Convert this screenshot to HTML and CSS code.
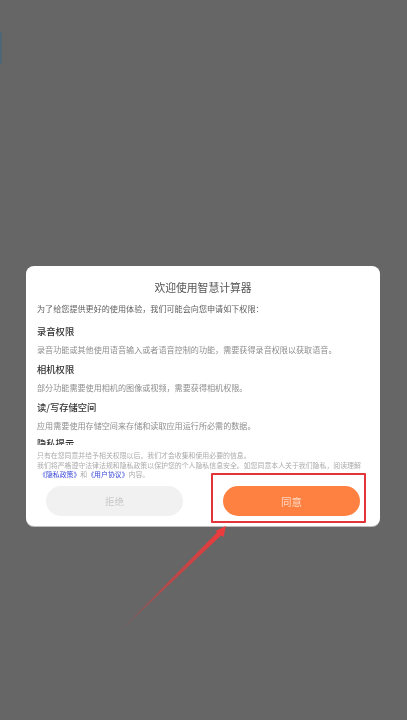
FILE: index.html
```html
<!DOCTYPE html>
<html lang="zh">
<head>
<meta charset="utf-8">
<title>欢迎使用智慧计算器</title>
<link rel="stylesheet" href="styles.css">
</head>
<body>
<div class="edge"></div>
<div class="card">
  <div class="scroll">
    <h1 class="title">欢迎使用智慧计算器</h1>
    <p class="intro">为了给您提供更好的使用体验&#xFF0C;我们可能会向您申请如下权限&#xFF1A;</p>
    <h2 class="perm">录音权限</h2>
    <p class="desc">录音功能或其他使用语音输入或者语音控制的功能&#xFF0C;需要获得录音权限以获取语音。</p>
    <h2 class="perm">相机权限</h2>
    <p class="desc">部分功能需要使用相机的图像或视频&#xFF0C;需要获得相机权限。</p>
    <h2 class="perm">读/写存储空间</h2>
    <p class="desc">应用需要使用存储空间来存储和读取应用运行所必需的数据。</p>
    <h2 class="perm cut">隐私提示</h2>
  </div>
  <div class="legal">
    <p>只有在您同意并给予相关权限以后&#xFF0C;我们才会收集和使用必要的信息。</p>
    <p>我们将严格遵守法律法规和隐私政策以保护您的个人隐私信息安全。如您同意本人关于我们隐私&#xFF0C;阅读理解</p>
    <p class="links"><a>《隐私政策》</a>和<a>《用户协议》</a>内容。</p>
  </div>
  <div class="actions">
    <button class="btn reject">拒绝</button>
    <button class="btn agree">同意</button>
  </div>
</div>
<div class="mark"></div>
<svg class="arrow" width="407" height="720" viewBox="0 0 407 720" aria-hidden="true">
  <defs>
    <linearGradient id="fade" gradientUnits="userSpaceOnUse" x1="113" y1="638" x2="226" y2="526">
      <stop offset="0" stop-color="#e8383a" stop-opacity="0"/>
      <stop offset="0.5" stop-color="#e8383a" stop-opacity="0.65"/>
      <stop offset="1" stop-color="#f03a3c"/>
    </linearGradient>
  </defs>
  <path d="M113 638 L217 532.5 L215.5 531 L226 526 L223.5 537 L221 535.5 Z" fill="url(#fade)"/>
</svg>
</body>
</html>
```
FILE: styles.css
```css
* { box-sizing: border-box; }
html, body { margin: 0; height: 720px; overflow: hidden; }
body {
  background: #666666;
  font-family: "Noto Sans CJK SC", "Noto Sans", sans-serif;
  padding: 266px 27px 0 26px;
  position: relative;
}
.edge {
  position: absolute;
  left: 0;
  top: 32px;
  width: 2px;
  height: 32px;
  background: #4f6675;
  filter: blur(0.5px);
}
.card {
  width: 354px;
  height: 260px;
  background: #fff;
  border-radius: 8px;
  padding: 14px 11px 0;
  display: flex;
  flex-direction: column;
  box-shadow: 0 1px 0 #bdbdbd;
}
.scroll { height: 165px; overflow: hidden; filter: blur(0.6px); }
.title {
  margin: 0;
  font-size: 10.8px;
  line-height: 14px;
  font-weight: 400;
  text-align: center;
  color: #555;
}
.intro {
  margin: 9px 0 0;
  font-size: 8.1px;
  line-height: 11px;
  color: #5e5e5e;
}
.perm {
  margin: 8px 0 0;
  font-size: 9.3px;
  line-height: 12px;
  font-weight: 500;
  color: #333;
}
.intro + .perm { margin-top: 11px; }
.desc {
  margin: 7px 0 0;
  font-size: 8.1px;
  line-height: 11px;
  color: #8e8e8e;
}
.perm.cut { margin-top: 6px; }
.legal {
  height: 29px;
  margin-top: 6px;
  font-size: 6.9px;
  line-height: 9.6px;
  color: #ababab;
  white-space: nowrap;
  filter: blur(0.6px);
}
.legal p { margin: 0; }
.links { padding-left: 2px; }
.links a { color: #3848d8; }
.actions {
  display: flex;
  justify-content: space-between;
  padding: 6px 9px 0;
}
.btn {
  width: 137px;
  height: 30px;
  border: 0;
  border-radius: 15px;
  padding: 0;
  font: inherit;
  font-size: 9.5px;
  filter: blur(0.5px);
}
.reject { background: #f1f1f1; color: #c8c8c8; }
.agree { background: #ff8142; color: #ffd9c2; font-size: 10.5px; }
.mark {
  position: absolute;
  left: 211px;
  top: 473px;
  width: 155px;
  height: 50px;
  border: 2px solid #e2343a;
  border-radius: 1px;
}
.arrow { position: absolute; left: 0; top: 0; pointer-events: none; filter: blur(0.4px); }
```
